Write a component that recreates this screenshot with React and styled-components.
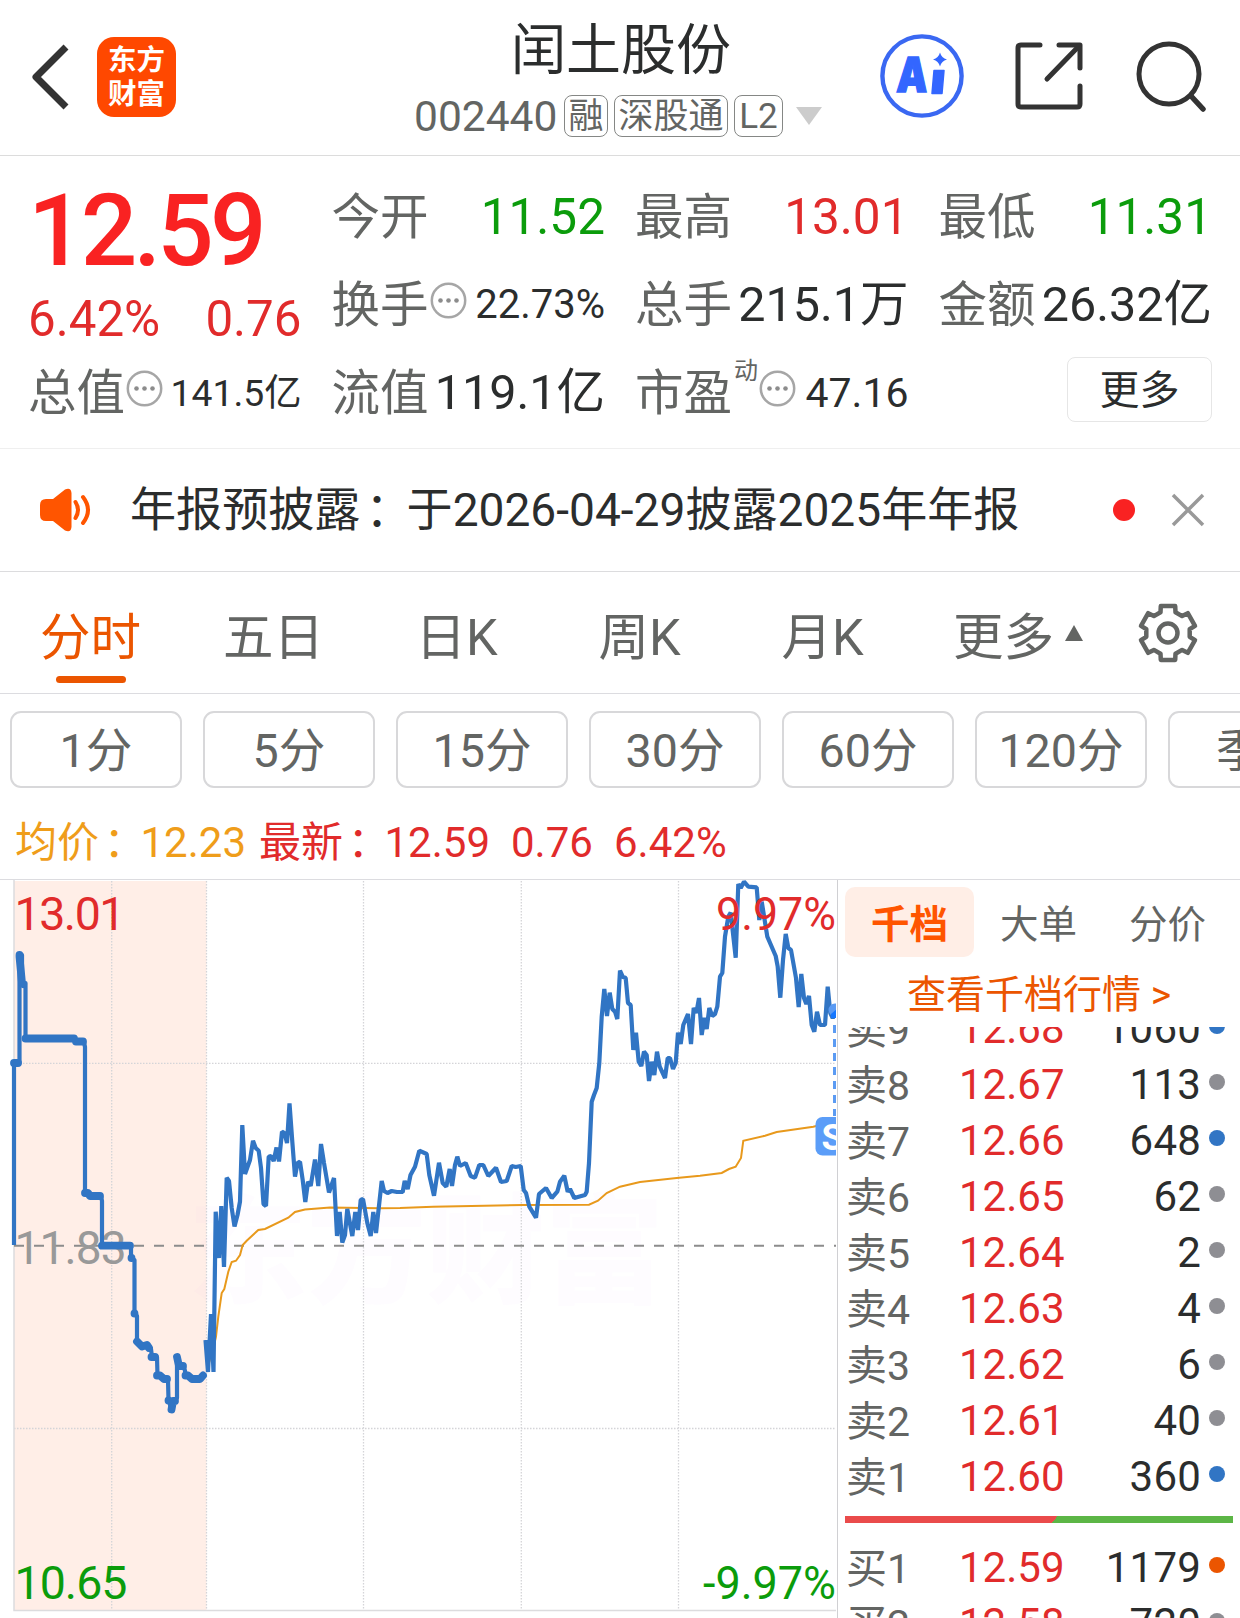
import React from 'react'
import styled, { createGlobalStyle } from 'styled-components'

const GlobalStyle = createGlobalStyle`
    * {
        box-sizing: border-box;
    }
    body {
        margin: 0;
        background: #fff;
        font-family: Roboto, "Noto Sans CJK SC", sans-serif;
        color: #2b2d2d;
    }
`;

const colors = {
    red: '#e12b2b',
    green: '#0b9c0b',
    dark: '#2b2d2d',
    grey: '#636563',
    orange: '#eb5500',
    blue: '#3175c4',
}

const tabs = ['分时', '五日', '日K', '周K', '月K']
const periods = ['1分', '5分', '15分', '30分', '60分', '120分', '季K']

const asks = [
    { name: '卖9', price: '12.68', volume: 1060, dot: colors.blue },
    { name: '卖8', price: '12.67', volume: 113 },
    { name: '卖7', price: '12.66', volume: 648, dot: colors.blue },
    { name: '卖6', price: '12.65', volume: 62 },
    { name: '卖5', price: '12.64', volume: 2 },
    { name: '卖4', price: '12.63', volume: 4 },
    { name: '卖3', price: '12.62', volume: 6 },
    { name: '卖2', price: '12.61', volume: 40 },
    { name: '卖1', price: '12.60', volume: 360, dot: colors.blue },
]

const bids = [
    { name: '买1', price: '12.59', volume: 1179, dot: colors.orange },
    { name: '买2', price: '12.58', volume: 720 },
]

const auctionLine = '14,1245 14,1063 19.5,1063 19.5,955 22,955 22,983 25.5,983 25.5,1038.5 75,1038.5 76,1041.5 84,1042 85,1047 85,1193 89,1193 90,1196 101,1196 102,1201 102,1245.7 131,1245.7 131,1258 134.5,1260 134.5,1313.5 137,1316 137,1341.5 142,1346 147,1344 151,1349 152,1357 157,1357 157.5,1375.5 161,1376 164,1379 168,1379 168.5,1400 171.5,1409 173,1402 177,1398 177,1357 179,1365 184,1367 186,1375 190,1376 192,1379 201,1379 203,1375.5'

// flat stretches of the auction, drawn heavier than the joins
const auctionDots = [
    'M14 1063H18',
    'M19.5 955V957L22 983L23 984',
    'M25.5 1038.5H74',
    'M76 1041.5H83',
    'M85 1193H88L90 1196H100',
    'M102 1245.7H130',
    'M131.5 1258V1258.1',
    'M134.5 1313.5V1313.6',
    'M137 1341.5L142 1346.5L147 1345L149 1348',
    'M151.5 1357H155',
    'M157 1375.5H160L164 1379H167',
    'M168.5 1400.5V1400.6',
    'M171.5 1409.5L173 1401H175',
    'M177 1357L179 1366H183',
    'M185.5 1375.5H188L192 1379H200L203 1375.5',
]

const priceLine = '205.5,1340 208,1372 211,1314 213.5,1372 215.7,1211.7 219,1258 221.3,1206 224,1267 226.7,1177.7 229,1181 231.7,1208 234.5,1226.5 237.5,1215 240,1201.5 242.3,1125 245,1174 250,1160 253,1140.7 255.7,1148 258.7,1150.7 261,1168 263.5,1204 266,1206 268.7,1156.7 271,1156 273.7,1161 276.5,1147.5 279,1161.5 282,1131.7 284.5,1133 287,1143 289.5,1103.5 292.3,1141.7 295,1176.5 297.5,1163 300,1161.7 302.7,1180 305.3,1202 308,1181.7 310.7,1186 315,1159.5 318.3,1186 321,1144 324,1163 329,1192.5 334,1178 337,1236 339.7,1212 342.3,1242.5 345,1235 347.3,1209 352.3,1236 355.3,1212 358,1230 360.7,1200 363,1199 367.3,1223 370.7,1236 373.3,1212 376,1233 381.7,1181 384,1191 387.5,1193 391.7,1191 397,1192 402.7,1192 404.7,1181 407.7,1189 410.5,1175 415,1166.7 419.3,1150.7 426.7,1154 429.3,1175 434,1195.7 439,1162.7 442.7,1183 446.3,1186.7 449.7,1169 452,1186 455,1165 457.3,1156.7 460,1166 465.7,1163 470.7,1176 475,1177.7 479.3,1165 483.3,1165 488.3,1176 496,1167.7 501,1182 506.7,1181 511.7,1166 515.7,1167 520.7,1166 523.7,1190 526,1193 529.3,1206.7 536,1217.7 539,1194 546,1188 551.7,1198 557.3,1191.7 560,1181.7 564.3,1175.7 567.7,1191.7 570,1189 574.3,1198 585,1195 586.7,1191.7 589,1163 591.7,1101.7 594,1095 596.7,1088 599.3,1063 601.7,1016.7 604.3,989 607,1016 609.7,992.7 612.3,1009 615,1011.7 617.3,1019 620,970.7 622.7,976.7 625.7,978 628,1003 630.7,1005 633.3,1050 636,1032.7 638.7,1061.7 641.3,1066 644,1051.7 646.7,1055 649,1081 651.7,1061.7 654.3,1075 657,1051.7 659.7,1066.7 665,1078 667.7,1058 670,1058 673,1069 675.7,1063 678,1032.7 680.7,1044 683.3,1025 688,1014 691,1044 693.7,1008 696.3,1013 699,998 701.7,1035 704.3,1017.7 706.7,1029 709.3,1008 712.3,1016 715,1014 717.3,1006.7 720,976.7 722.3,973 725,936.7 728.3,916.7 730.7,912.7 735.7,957.7 738.3,884 740.7,888 744,881.7 748.3,886.7 756.7,887.3 759.3,920 761.7,901.7 767.3,936.7 775.7,956 777.7,966.7 780.3,997.7 783,960 785.7,934 788.3,948 791,950 796,978 798.7,1007 801.3,974 804,998 806.3,1004 809,996 811.7,1025 814.3,1031.7 817,1011.7 820,1025 825,1025 827.7,986.7 830.3,1013 832.7,1018 835,1013'

const averageLine = '208,1366 213,1350 216,1336.7 218.3,1316.7 221.7,1293 224.3,1289 228.3,1271.7 231.7,1262 236,1260.7 240,1255 242.7,1245 246.7,1240.7 258.3,1230 265,1229 288.3,1217.7 295,1212 305,1209.5 330,1207.5 380,1208.3 400,1208 433,1206.7 523,1205 589,1204.7 598,1200.7 606.7,1193 620,1186.7 640,1182 676.7,1178 700,1175.7 721.7,1173 729,1169 735.7,1166.7 741,1158 743.3,1140.7 765,1135.7 776.7,1132 813.3,1126.7 837,1120.7'

function gearPoints() {
    const points = []
    for (let i = 0; i < 6; i++) {
        const teeth = [[-20, 22], [-15, 28], [15, 28], [20, 22]]
        teeth.forEach(([deg, r]) => {
            const a = (i * 60 + deg - 90) * Math.PI / 180
            points.push(`${(31 + r * Math.cos(a)).toFixed(1)},${(31 + r * Math.sin(a)).toFixed(1)}`)
        })
    }
    return points.join(' ')
}

function InfoIcon() {
    return (
        <svg width="37" height="37" viewBox="0 0 37 37">
            <circle cx="18.5" cy="18.5" r="16.7" fill="none" stroke="#a6a6a6" strokeWidth="2.5" />
            <circle cx="10.5" cy="18.5" r="2.3" fill="#8c8c8c" />
            <circle cx="18.5" cy="18.5" r="2.3" fill="#8c8c8c" />
            <circle cx="26.5" cy="18.5" r="2.3" fill="#8c8c8c" />
        </svg>
    )
}

function Header() {
    return (
        <HeaderStyled>
            <HeaderSide>
                <svg width="44" height="72" viewBox="0 0 44 72">
                    <path d="M39 6L9 36L39 66" fill="none" stroke="#333" strokeWidth="7" strokeLinejoin="round" />
                </svg>
                <Logo>
                    <span>东方</span>
                    <span>财富</span>
                </Logo>
            </HeaderSide>
            <HeaderTitle>
                <h1>闰土股份</h1>
                <StockCode>
                    <span>002440</span>
                    <Badge $width={44}>融</Badge>
                    <Badge $width={114}>深股通</Badge>
                    <Badge $width={49}>L2</Badge>
                    <svg width="26" height="18" viewBox="0 0 26 18">
                        <path d="M0 0H26L13 18Z" fill="#ccc" />
                    </svg>
                </StockCode>
            </HeaderTitle>
            <HeaderActions>
                <svg width="84" height="84" viewBox="0 0 84 84">
                    <circle cx="42" cy="42" r="39.6" fill="none" stroke="#3a68f2" strokeWidth="4.4" />
                    <text x="17" y="58" fontSize="48" fontWeight="900" fontFamily="Inter" fill="#3366ff" stroke="#3366ff" strokeWidth="1.5" textLength="31" lengthAdjust="spacingAndGlyphs" transform="skewX(-3) translate(2 0)">A</text>
                    <path d="M54 36.500H64L62 59.500H52Z" fill="#3366ff" stroke="#3366ff" strokeWidth="1.500" strokeLinejoin="round" />
                    <path d="M60 18.500Q61.500 24 67 25.500Q61.500 27 60 32.500Q58.500 27 53 25.500Q58.500 24 60 18.500Z" fill="#3366ff" />
                </svg>
                <svg width="68" height="68" viewBox="0 0 68 68" fill="none" stroke="#333" strokeWidth="5" strokeLinecap="round" strokeLinejoin="round">
                    <path d="M25 3H6Q3 3 3 6V62Q3 65 6 65H62Q65 65 65 62V44" />
                    <path d="M44 3H65V26" />
                    <path d="M64 4L32 37" />
                </svg>
                <svg width="72" height="72" viewBox="0 0 72 72" fill="none" stroke="#333" strokeWidth="5">
                    <circle cx="34" cy="34" r="30" />
                    <path d="M56 56L68 69" strokeLinecap="round" strokeWidth="5.500" />
                </svg>
            </HeaderActions>
        </HeaderStyled>
    )
}

function Quote() {
    return (
        <QuoteStyled>
            <Latest>
                <LatestPrice>12.59</LatestPrice>
                <LatestChange>
                    <span>6.42%</span>
                    <span>0.76</span>
                </LatestChange>
            </Latest>
            <Cell>
                <Label>今开</Label>
                <Value $color={colors.green} $size={49.5}>11.52</Value>
            </Cell>
            <Cell>
                <Label>最高</Label>
                <Value $color={colors.red} $size={49.5}>13.01</Value>
            </Cell>
            <Cell>
                <Label>最低</Label>
                <Value $color={colors.green} $size={49.5}>11.31</Value>
            </Cell>
            <Cell>
                <Label>换手<InfoIcon /></Label>
                <Value $size={40}>22.73%</Value>
            </Cell>
            <Cell>
                <Label>总手</Label>
                <Value $size={48.5}>215.1万</Value>
            </Cell>
            <Cell>
                <Label>金额</Label>
                <Value $size={48.5}>26.32亿</Value>
            </Cell>
            <Cell>
                <Label>总值<InfoIcon /></Label>
                <Value $size={37.3}>141.5亿</Value>
            </Cell>
            <Cell>
                <Label>流值</Label>
                <Value $size={48.5}>119.1亿</Value>
            </Cell>
            <Cell>
                <Label>市盈<sup>动</sup><InfoIcon /></Label>
                <Value $size={41}>47.16</Value>
            </Cell>
            <MoreCell>
                <MoreButton>更多</MoreButton>
            </MoreCell>
        </QuoteStyled>
    )
}

function Notice() {
    return (
        <NoticeStyled>
            <svg width="52" height="44" viewBox="0 0 52 44">
                <path d="M6 11H13L25 1.500Q31 -1 31.500 5V39Q31 45 25 42.500L13 33H6Q0 33 0 27V17Q0 11 6 11Z" fill="#ff5500" />
                <path d="M35.500 14Q40.500 22 35.500 30M43 9Q53 22 43 35" fill="none" stroke="#ff5500" strokeWidth="4" strokeLinecap="round" />
            </svg>
            <p>年报预披露<Colon>：</Colon>于2026-04-29披露2025年年报</p>
            <RedDot />
            <svg width="34" height="34" viewBox="0 0 34 34">
                <path d="M2 2L32 32M32 2L2 32" stroke="#999" strokeWidth="3.500" />
            </svg>
        </NoticeStyled>
    )
}

function Chart() {
    return (
        <ChartStyled viewBox="0 880 836 738">
            <rect x="14" y="881" width="192.500" height="729" fill="#ffeee7" />
            <text x="188" y="1294" fontSize="119" fontWeight="900" fill="#a02be2" fillOpacity="0.016">东方财富</text>
            <g stroke="#d4d4d8" strokeWidth="1.300" strokeDasharray="1.500 1.500">
                <path d="M111.700 881V1610M206.500 881V1610M363.500 881V1610M521.300 881V1610M678.500 881V1610" />
                <path d="M14 1063.300H837M14 1428.500H837" />
            </g>
            <path d="M14 880V1610.500H837" fill="none" stroke="#dcdcde" strokeWidth="1.500" />
            <path d="M14 1245.700H837" stroke="#8c8c8c" strokeWidth="2" strokeDasharray="10 10" />
            <text x="14.500" y="1264" fontSize="46" fill="#999" textLength="112">11.83</text>
            <polyline points={averageLine} fill="none" stroke="#e8991c" strokeWidth="2" />
            <g fill="none" stroke={colors.blue} strokeLinejoin="round">
                <polyline points={auctionLine} strokeWidth="4.200" />
                <path d={auctionDots.join('')} strokeWidth="7.800" strokeLinecap="round" />
                <polyline points={priceLine} strokeWidth="4.200" strokeLinejoin="bevel" />
            </g>
            <path d="M835 1025V1116" stroke="#5b9bf3" strokeWidth="4" strokeDasharray="8 6" />
            <circle cx="835" cy="1010" r="6.500" fill="#5b9bf3" />
            <path d="M831 1014L837 1009V1018H831Z" fill="#1677ff" />
            <rect x="815.500" y="1117" width="39" height="38.500" rx="7" fill="#5b9df8" />
            <text x="821.500" y="1150" fontSize="36" fontWeight="700" fill="#fff">S</text>
            <g fontSize="46.500">
                <text x="14.500" y="929.500" fill={colors.red} textLength="111">13.01</text>
                <text x="716" y="929.500" fill={colors.red} textLength="120" lengthAdjust="spacingAndGlyphs">9.97%</text>
                <text x="14.500" y="1599" fill={colors.green} textLength="113">10.65</text>
                <text x="703" y="1599" fill={colors.green} textLength="133" lengthAdjust="spacingAndGlyphs">-9.97%</text>
            </g>
        </ChartStyled>
    )
}

function OrderRow({ name, price, volume, dot }) {
    return (
        <OrderRowStyled>
            <span className="name">{name}</span>
            <span className="price">{price}</span>
            <span className="volume">{volume}</span>
            <OrderDot $color={dot} />
        </OrderRowStyled>
    )
}

function OrderBook() {
    return (
        <OrderBookStyled>
            <BookTabs>
                <BookTab $active>千档</BookTab>
                <BookTab>大单</BookTab>
                <BookTab>分价</BookTab>
            </BookTabs>
            <BookLink>查看千档行情 &gt;</BookLink>
            <Asks>
                {asks.map((item) => <OrderRow key={item.name} {...item} />)}
            </Asks>
            <RatioBar />
            <div>
                {bids.map((item) => <OrderRow key={item.name} {...item} />)}
            </div>
        </OrderBookStyled>
    )
}

function App() {
    return (
        <>
            <GlobalStyle />
            <Page>
                <Header />
                <Quote />
                <Notice />
                <TabBar>
                    {tabs.map((tab, index) => (
                        <Tab key={tab} $active={index === 0}>{tab}</Tab>
                    ))}
                    <MoreTab>
                        更多
                        <svg width="18" height="16" viewBox="0 0 18 16">
                            <path d="M9 0L18 16H0Z" fill={colors.grey} />
                        </svg>
                    </MoreTab>
                    <svg width="62" height="62" viewBox="0 0 62 62" fill="none" stroke={colors.grey} strokeWidth="4.500">
                        <polygon points={gearPoints()} strokeLinejoin="round" />
                        <circle cx="31" cy="31" r="9.500" />
                    </svg>
                </TabBar>
                <Periods>
                    {periods.map((period) => <Period key={period}>{period}</Period>)}
                </Periods>
                <Summary>
                    <SummaryItem $color="#ef9d1a" $width={244}><span>均价<Colon>：</Colon></span>12.23</SummaryItem>
                    <SummaryItem $color={colors.red} $width={252}><span>最新<Colon>：</Colon></span>12.59</SummaryItem>
                    <SummaryItem $color={colors.red} $width={103}>0.76</SummaryItem>
                    <SummaryItem $color={colors.red}>6.42%</SummaryItem>
                </Summary>
                <Main>
                    <Chart />
                    <OrderBook />
                </Main>
            </Page>
        </>
    )
}

const Page = styled.div`
    width: 1240px;
    height: 1618px;
    overflow: hidden;
    background: #fff;
    white-space: nowrap;
    svg {
        display: block;
        flex-shrink: 0;
    }
`;

const HeaderStyled = styled.header`
    display: grid;
    grid-template-columns: 414px 466px 1fr;
    height: 156px;
    border-bottom: 1.5px solid #dcdcdc;
`;

const HeaderSide = styled.div`
    display: flex;
    align-items: center;
    gap: 26px;
    padding: 0 0 2px 27px;
`;

const Logo = styled.div`
    width: 79px;
    height: 80px;
    border-radius: 17px;
    background: #ff4800;
    color: #fff;
    display: flex;
    flex-direction: column;
    align-items: center;
    justify-content: center;
    padding-top: 2px;
    font-size: 28.5px;
    font-weight: 700;
    span{
        line-height: 34px;
    }
`;

const HeaderTitle = styled.div`
    h1{
        margin: 0;
        padding: 17px 0 0 97px;
        font-size: 55px;
        line-height: 66px;
        font-weight: 400;
    }
`;

const StockCode = styled.div`
    display: flex;
    align-items: center;
    height: 44px;
    margin-top: 11px;
    font-size: 42.5px;
    color: ${colors.grey};
    gap: 6px;
    >span{
        width: 144px;
    }
    svg{
        margin-left: 7px;
    }
`;

const Badge = styled.div`
    width: ${props => props.$width}px;
    height: 42px;
    border: 1.5px solid #858785;
    border-radius: 8px;
    font-size: 35px;
    line-height: 42px;
    display: flex;
    justify-content: center;
`;

const HeaderActions = styled.div`
    display: flex;
    align-items: center;
    gap: 51px;
    padding-bottom: 3px;
    svg:last-child{
        margin-left: 1px;
    }
`;

const QuoteStyled = styled.section`
    display: grid;
    grid-template-columns: repeat(4, 275.5px);
    grid-template-rows: repeat(3, 88px);
    column-gap: 28px;
    height: 293px;
    padding: 15px 0 0 28px;
    border-bottom: 1.5px solid #efefef;
`;

const Latest = styled.div`
    grid-row: span 2;
    padding-top: 2px;
    color: ${colors.red};
`;

const LatestPrice = styled.div`
    font-size: 99.5px;
    font-weight: 500;
    line-height: 116px;
    letter-spacing: -3.8px;
    color: #f92222;
`;

const LatestChange = styled.div`
    display: flex;
    justify-content: space-between;
    padding-right: 2px;
    font-size: 49.3px;
    line-height: 60px;
`;

const Cell = styled.div`
    display: flex;
    align-items: center;
    justify-content: space-between;
    padding-right: 2px;
`;

const Label = styled.div`
    display: flex;
    align-items: center;
    font-size: 48.5px;
    color: ${colors.grey};
    line-height: 88px;
    padding-top: 6px;
    svg{
        margin-top: -11px;
        margin-left: 1px;
    }
    sup{
        font-size: 24px;
        line-height: 24px;
        margin: -46px 0 0 2px;
    }
`;

const Value = styled.div`
    font-size: ${props => props.$size}px;
    color: ${props => props.$color || colors.dark};
    line-height: 88px;
    padding-top: 3px;
`;

const MoreCell = styled.div`
    display: flex;
    align-items: center;
    justify-content: flex-end;
    padding: 0 2px 3px 0;
`;

const MoreButton = styled.div`
    width: 145px;
    height: 65px;
    border: 1.5px solid #e6e6e6;
    border-radius: 8px;
    font-size: 40px;
    line-height: 66px;
    text-align: center;
`;

const NoticeStyled = styled.section`
    display: flex;
    align-items: center;
    height: 123px;
    padding-left: 40px;
    border-bottom: 1.5px solid #dcdcde;
    p{
        margin: 0 0 0 38px;
        width: 983px;
        font-size: 46.1px;
        line-height: 60px;
    }
    svg:last-child{
        margin-left: 36px;
    }
`;

const Colon = styled.b`
    display: inline-block;
    width: 1em;
    font-weight: 400;
    text-indent: 0.11em;
`;

const RedDot = styled.div`
    width: 22px;
    height: 22px;
    border-radius: 50%;
    background: #f92222;
`;

const TabBar = styled.nav`
    display: flex;
    align-items: center;
    height: 122px;
    border-bottom: 1.5px solid #dcdce0;
    font-size: 50.5px;
    color: ${colors.grey};
`;

const Tab = styled.div`
    width: 183px;
    height: 120px;
    display: flex;
    flex-direction: column;
    align-items: center;
    line-height: 60px;
    padding: 35px 2px 0 0;
    color: ${props => props.$active ? colors.orange : colors.grey};
    &::after{
        content: "";
        width: 70px;
        height: 7px;
        margin-top: 8px;
        border-radius: 4px;
        background: ${props => props.$active ? colors.orange : 'transparent'};
    }
`;

const MoreTab = styled.div`
    display: flex;
    align-items: center;
    gap: 11px;
    width: 184px;
    padding-left: 38px;
    margin-right: 38px;
`;

const Periods = styled.div`
    display: flex;
    gap: 21px;
    padding: 17px 0 0 10px;
    height: 110px;
`;

const Period = styled.div`
    flex: 0 0 172px;
    height: 77px;
    border: 2px solid #d8d8da;
    border-radius: 11px;
    font-size: 46.6px;
    line-height: 76px;
    text-align: center;
    color: ${colors.grey};
`;

const Summary = styled.div`
    display: flex;
    height: 76px;
    padding-left: 15px;
    border-bottom: 1.5px solid #dcdce0;
    font-size: 42px;
    line-height: 78px;
`;

const SummaryItem = styled.div`
    flex-shrink: 0;
    width: ${props => props.$width ? `${props.$width}px` : 'auto'};
    color: ${props => props.$color};
    span{
        display: inline-block;
        width: 125.5px;
    }
`;

const Main = styled.main`
    display: flex;
    height: 738px;
`;

const ChartStyled = styled.svg`
    width: 838px;
    height: 738px;
    padding-right: 1px;
    border-right: 1px solid #d0d0d3;
`;

const OrderBookStyled = styled.aside`
    width: 402px;
    height: 738px;
    overflow: hidden;
`;

const BookTabs = styled.div`
    display: flex;
    padding: 7px 0 0 7px;
`;

const BookTab = styled.div`
    width: 129px;
    height: 70px;
    border-radius: 10px;
    text-align: center;
    font-size: 38.5px;
    line-height: 75px;
    font-weight: ${props => props.$active ? 700 : 400};
    color: ${props => props.$active ? '#ff5500' : colors.grey};
    background: ${props => props.$active ? '#ffeee6' : 'transparent'};
`;

const BookLink = styled.div`
    height: 70px;
    padding-left: 69px;
    font-size: 39px;
    line-height: 76px;
    color: ${colors.orange};
`;

const Asks = styled.div`
    height: 477px;
    overflow: hidden;
    display: flex;
    flex-direction: column;
    justify-content: flex-end;
`;

const OrderRowStyled = styled.div`
    flex: 0 0 56px;
    height: 56px;
    display: flex;
    align-items: center;
    padding-left: 8px;
    font-size: 42px;
    line-height: 56px;
    .name{
        width: 113px;
        font-size: 41px;
        padding-top: 3px;
        color: ${colors.grey};
    }
    .price{
        width: 112px;
        padding-top: 2px;
        color: ${colors.red};
    }
    .volume{
        width: 130px;
        padding-top: 2px;
        text-align: right;
        letter-spacing: 0.2px;
    }
`;

const OrderDot = styled.i`
    width: 16px;
    height: 16px;
    margin: 0 0 4px 8px;
    border-radius: 50%;
    background: ${props => props.$color || '#8e8e93'};
`;

const RatioBar = styled.div`
    width: 388px;
    height: 7px;
    margin: 12px 0 16px 7px;
    background: linear-gradient(128deg, #ea4b4b 54%, #5cb646 54%);
`;

export default App
